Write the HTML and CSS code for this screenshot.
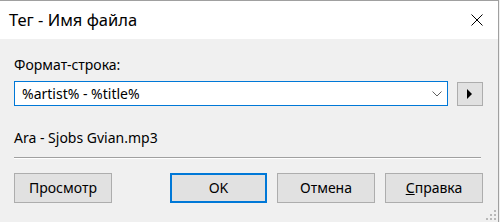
FILE: index.html
```html
<!DOCTYPE html>
<html lang="ru">
<head>
<meta charset="utf-8">
<title>Тег - Имя файла</title>
<link rel="stylesheet" href="styles.css">
</head>
<body>
<div class="window">
  <div class="titlebar">
    <span class="title">Тег - Имя файла</span>
    <span class="close" aria-label="Закрыть">
      <svg width="12" height="12" viewBox="0 0 12 12"><path d="M0.5 0.5 L11.5 11.5 M11.5 0.5 L0.5 11.5" stroke="#000" stroke-width="1" fill="none"/></svg>
    </span>
  </div>
  <div class="content">
    <div class="label">Формат-строка:</div>
    <div class="row">
      <div class="combo">
        <span class="combo-text">%artist% - %title%</span>
        <svg class="chevron" width="10" height="6" viewBox="0 0 10 6"><path d="M0.5 0.5 L5 5 L9.5 0.5" stroke="#606060" stroke-width="1" fill="none"/></svg>
      </div>
      <div class="arrow-btn">
        <svg width="6" height="10" viewBox="0 0 6 10"><path d="M0 0 L5 5 L0 10 Z" fill="#000"/></svg>
      </div>
    </div>
    <div class="preview">Ara - Sjobs Gvian.mp3</div>
    <div class="separator"></div>
    <div class="buttons">
      <div class="btn">Просмотр</div>
      <div class="btn-group">
        <div class="btn btn-default">OK</div>
        <div class="btn">Отмена</div>
        <div class="btn"><span class="mnemonic">С</span>правка</div>
      </div>
    </div>
    <div class="grip">
      <svg width="11" height="11" viewBox="0 0 11 11" fill="#b8b8b8">
        <rect x="8" y="0" width="2" height="2"/>
        <rect x="4" y="4" width="2" height="2"/><rect x="8" y="4" width="2" height="2"/>
        <rect x="0" y="8" width="2" height="2"/><rect x="4" y="8" width="2" height="2"/><rect x="8" y="8" width="2" height="2"/>
      </svg>
    </div>
  </div>
</div>
</body>
</html>
```
FILE: styles.css
```css
html, body {
  margin: 0;
  padding: 0;
  background: #f0f0f0;
}
body {
  font-family: "Noto Sans", "Open Sans", sans-serif;
  color: #000;
  width: 500px;
  height: 222px;
  overflow: hidden;
}
.window {
  width: 498px;
  height: 221px;
  border-top: 1px solid #a0a0a0;
  border-right: 1px solid #a0a0a0;
  display: flex;
  flex-direction: column;
}
.titlebar {
  height: 38px;
  background: #fff;
  display: flex;
  align-items: center;
  justify-content: space-between;
  padding: 0 15px 0 9px;
  flex: none;
}
.title {
  font-size: 16.5px;
  line-height: 20px;
}
.close {
  display: flex;
  width: 12px;
  height: 12px;
}
.content {
  flex: 1;
  position: relative;
  background: #f0f0f0;
  padding: 0 15px 0 14px;
  font-size: 14px;
}
.label {
  margin-top: 17px;
  line-height: 18px;
  height: 18px;
}
.row {
  display: flex;
  align-items: center;
  margin-top: 7px;
  gap: 9px;
}
.combo {
  flex: none;
  height: 23px;
  border: 1px solid #0078d7;
  background: #fff;
  display: flex;
  align-items: center;
  justify-content: space-between;
  padding: 0 5px 0 7px;
  box-sizing: content-box;
  width: 420px;
}
.combo-text {
  line-height: 18px;
}
.chevron {
  display: block;
}
.arrow-btn {
  width: 24px;
  height: 22px;
  border: 1px solid #adadad;
  background: #e1e1e1;
  display: flex;
  align-items: center;
  justify-content: center;
}
.preview {
  margin-top: 23px;
  line-height: 18px;
  height: 18px;
}
.separator {
  margin-top: 10px;
  height: 1px;
  background: #a0a0a0;
  border-bottom: 1px solid #fff;
  width: 467px;
}
.buttons {
  margin-top: 14px;
  display: flex;
  justify-content: space-between;
  width: 469px;
}
.btn-group {
  display: flex;
  gap: 10px;
}
.btn {
  box-sizing: border-box;
  width: 98px;
  height: 30px;
  border: 1px solid #adadad;
  background: #e1e1e1;
  display: flex;
  align-items: center;
  justify-content: center;
  line-height: 18px;
}
.btn-default {
  border: 2px solid #0078d7;
  width: 97px;
}
.mnemonic {
  text-decoration: underline;
}
.grip {
  position: absolute;
  right: 1px;
  bottom: 1px;
  display: flex;
}
```
